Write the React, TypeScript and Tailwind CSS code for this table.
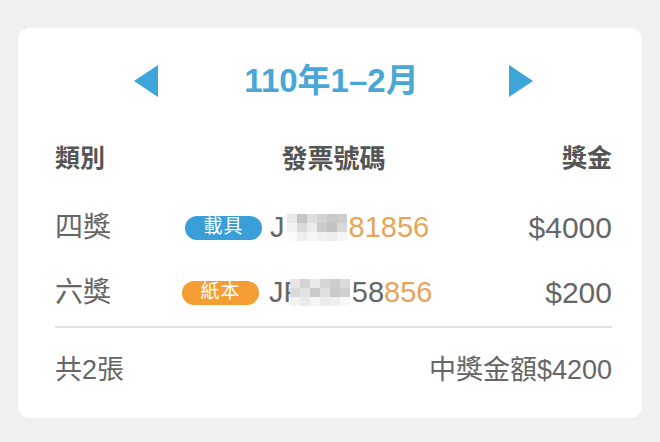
const font = { fontFamily: '"Liberation Sans", "Noto Sans CJK TC", sans-serif' };

const mosaicA = [
  "#e8e8e8", "#c4c4c4", "#dedede", "#d2d2d2", "#c8c8c8", "#cdcdcd",
  "#f1f1f1", "#dadada", "#ebebeb", "#cbcbcb", "#c2c2c2", "#d8d8d8",
  "#fafafa", "#eeeeee", "#f6f6f6", "#f1f1f1", "#ededed", "#f5f5f5",
];
const mosaicB = [
  "#e5e5e5", "#d4d4d4", "#eaeaea", "#d6d6d6", "#cdcdcd", "#dbdbdb",
  "#d9d9d9", "#e2e2e2", "#c9c9c9", "#e0e0e0", "#cbcbcb", "#d0d0d0",
  "#f3f3f3", "#eaeaea", "#f5f5f5", "#ececec", "#efefef", "#f7f7f7",
];

// pixelated blur over the hidden invoice digits
const Mosaic = ({ cells, className = "" }: { cells: string[]; className?: string }) => (
  <div className={`grid grid-cols-[repeat(6,10px)] grid-rows-[repeat(3,9px)] ${className}`}>
    {cells.map((c, i) => (
      <div key={i} className="w-[10px] h-[9px]" style={{ backgroundColor: c }} />
    ))}
  </div>
);

const Badge = ({ label, color }: { label: string; color: string }) => (
  <span
    className={`inline-flex items-center justify-center w-[77px] h-[24px] rounded-full text-white text-[19px] tracking-[1px] ${color}`}
  >
    {label}
  </span>
);

export default function App() {
  return (
    <div className="w-[660px] h-[442px] bg-[#f0f0f0] pt-[28px] px-[18px]" style={font}>
      <div className="bg-white rounded-[12px] h-[390px] pl-[37px] pr-[30px] pt-[37px]">
        {/* month switcher */}
        <div className="flex items-center justify-center h-[32px]">
          <button className="w-[24px] h-[32px] mr-[86px]">
            <svg width="24" height="32" viewBox="0 0 24 32">
              <polygon points="24,0 24,32 0,16" fill="#3da5da" />
            </svg>
          </button>
          <h2 className="text-[33px] font-bold text-[#4aa6d6] text-center">110年1–2月</h2>
          <button className="w-[24px] h-[32px] ml-[90px]">
            <svg width="24" height="32" viewBox="0 0 24 32">
              <polygon points="0,0 24,16 0,32" fill="#3da5da" />
            </svg>
          </button>
        </div>

        {/* column titles */}
        <div className="flex justify-between items-center h-[32px] mt-[46px] font-bold text-[#555]">
          <span className="text-[25px]">類別</span>
          <span className="text-[26px]">發票號碼</span>
          <span className="text-[25px]">獎金</span>
        </div>

        {/* rows */}
        <div className="grid grid-cols-[130px_1fr_auto] items-center mt-[30px] h-[32px] text-[28px] text-[#666]">
          <span>四獎</span>
          <div className="flex items-center text-[29px]">
            <Badge label="載具" color="bg-[#3a9fd9]" />
            <span className="ml-[8px]">J</span>
            <Mosaic cells={mosaicA} className="mx-[2px]" />
            <span className="text-[#e8a458]">81856</span>
          </div>
          <span className="text-[30px]">$4000</span>
        </div>
        <div className="grid grid-cols-[127px_1fr_auto] items-center mt-[33px] h-[32px] text-[28px] text-[#666]">
          <span>六獎</span>
          <div className="flex items-center text-[29px]">
            <Badge label="紙本" color="bg-[#f59c33]" />
            <span className="ml-[10px]">JP</span>
            <Mosaic cells={mosaicB} className="-ml-[13px] mr-[2px]" />
            <span>58</span>
            <span className="text-[#e8a458]">856</span>
          </div>
          <span className="text-[30px]">$200</span>
        </div>

        <hr className="mt-[24px] border-0 h-[2px] bg-[#e2e2e2]" />

        <div className="flex justify-between items-center h-[32px] mt-[26px] text-[27px] text-[#666]">
          <span>共2張</span>
          <span>中獎金額$4200</span>
        </div>
      </div>
    </div>
  );
}
